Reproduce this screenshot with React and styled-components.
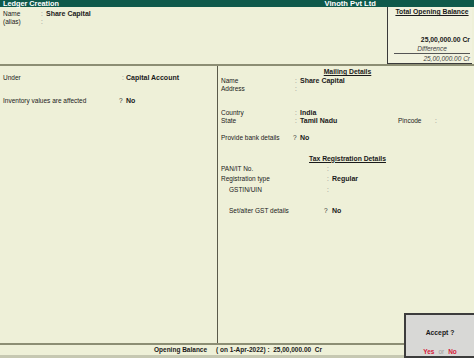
import React from 'react';
import styled, {createGlobalStyle} from 'styled-components';

const GlobalStyle = createGlobalStyle`
  html, body {
    margin: 0;
    padding: 0;
    background: #eef0d8;
  }
  body {
    font-family: "Liberation Sans", Arial, sans-serif;
    font-size: 6.5px;
    color: #1a1a1a;
  }
`;

const Screen = styled.div`
  position: relative;
  width: 474px;
  height: 358px;
  background: #eef0d8;
  display: flex;
  flex-direction: column;
  overflow: hidden;
`;

const TitleBar = styled.div`
  height: 7px;
  background: #0f5a4b;
  color: #fff;
  font-weight: bold;
  font-size: 7.3px;
  line-height: 7px;
  display: grid;
  grid-template-columns: 1fr 1fr;
  padding-left: 3px;
`;

const Company = styled.span`
  justify-self: start;
  padding-left: 86px;
  font-size: 7.6px;
`;

const TopArea = styled.div`
  height: 57px;
  display: flex;
  border-bottom: 2px solid #8c8e74;
`;

const TopFields = styled.div`
  flex: 1;
  padding: 3px 0 0 3px;
`;

const BalanceBox = styled.div`
  box-sizing: border-box;
  width: 85px;
  margin-right: 2px;
  border-left: 1px solid #3a3a3a;
  border-bottom: 1px solid #3a3a3a;
  background: #f1f2de;
  padding: 1px 2px 0 6px;
  display: flex;
  flex-direction: column;
  align-items: stretch;
  line-height: 8px;
`;

const BoxTitle = styled.div`
  font-weight: bold;
  text-decoration: underline;
  text-align: center;
  font-size: 6.8px;
`;

const BoxAmount = styled.div`
  font-weight: ${p => (p.$bold ? 'bold' : 'normal')};
  font-style: ${p => (p.$bold ? 'normal' : 'italic')};
  font-size: ${p => (p.$bold ? 6.8 : 6.5)}px;
  text-align: right;
  margin-top: ${p => p.$top}px;
  color: ${p => (p.$bold ? '#1a1a1a' : '#444')};
`;

const BoxLabel = styled.div`
  font-style: italic;
  text-align: center;
  color: #444;
  margin-top: 1px;
  border-bottom: 1px solid #555;
`;

const Main = styled.div`
  flex: 1;
  display: grid;
  grid-template-columns: 218px 1fr;
  border-bottom: 2px solid #8c8e74;
`;

const LeftPane = styled.div`
  border-right: 1px solid #5a5a4a;
  padding: 8px 0 0 3px;
`;

const RightPane = styled.div`
  padding: 2px 0 0 3px;
`;

const Row = styled.div`
  display: flex;
  align-items: baseline;
  height: ${p => p.$h || 7.5}px;
  margin-top: ${p => p.$top || 0}px;
  padding-left: ${p => p.$indent || 0}px;
  line-height: 7.5px;
  white-space: nowrap;
`;

const Label = styled.span`
  width: ${p => p.$w}px;
  flex: none;
`;

const Sep = styled.span`
  width: ${p => p.$w || 5}px;
  flex: none;
  color: ${p => (p.$q ? '#333' : '#888')};
`;

const Value = styled.span`
  font-weight: bold;
  font-size: 7px;
  width: ${p => p.$w || 'auto'};
  flex: none;
`;

const SectionHead = styled.div`
  font-weight: bold;
  font-size: 6.8px;
  text-decoration: underline;
  text-align: center;
  margin-top: ${p => p.$top}px;
  height: 8px;
  line-height: 8px;
`;

const BottomBar = styled.div`
  height: 10px;
  line-height: 10px;
  padding-left: 154px;
  font-weight: bold;
  display: flex;
  gap: 9px;
  white-space: nowrap;
`;

const Strip = styled.div`
  height: 3px;
  background: #c6c8b2;
`;

const AcceptBox = styled.div`
  position: absolute;
  left: 404px;
  top: 313px;
  right: 0;
  bottom: 0;
  background: #d8d8d6;
  border: 2px solid #3c3c3c;
  border-right: none;
  display: flex;
  flex-direction: column;
  align-items: center;
  font-weight: bold;
`;

const AcceptText = styled.div`
  margin-top: 14px;
  font-size: 6.8px;
`;

const Choice = styled.div`
  margin-top: 12px;
  display: flex;
  gap: 4px;
  color: #d4183a;
`;

const Or = styled.span`
  color: #9a9a9a;
  font-weight: normal;
`;

const App = () => (
  <>
    <GlobalStyle/>
    <Screen>
      <TitleBar>
        <span>Ledger Creation</span>
        <Company>Vinoth Pvt Ltd</Company>
      </TitleBar>
      <TopArea>
        <TopFields>
          <Row><Label $w={38}>Name</Label><Sep>:</Sep><Value>Share Capital</Value></Row>
          <Row><Label $w={38}>(alias)</Label><Sep>:</Sep></Row>
        </TopFields>
        <BalanceBox>
          <BoxTitle>Total Opening Balance</BoxTitle>
          <BoxAmount $bold $top={20}>25,00,000.00 Cr</BoxAmount>
          <BoxLabel>Difference</BoxLabel>
          <BoxAmount $top={1}>25,00,000.00 Cr</BoxAmount>
        </BalanceBox>
      </TopArea>
      <Main>
        <LeftPane>
          <Row><Label $w={119}>Under</Label><Sep $w={4}>:</Sep><Value>Capital Account</Value></Row>
          <Row $top={15}><Label $w={116}>Inventory values are affected</Label><Sep $q $w={7}>?</Sep><Value>No</Value></Row>
        </LeftPane>
        <RightPane>
          <SectionHead $top={0}>Mailing Details</SectionHead>
          <Row $top={1}><Label $w={74}>Name</Label><Sep>:</Sep><Value>Share Capital</Value></Row>
          <Row><Label $w={74}>Address</Label><Sep>:</Sep></Row>
          <Row $top={17}><Label $w={74}>Country</Label><Sep>:</Sep><Value>India</Value></Row>
          <Row><Label $w={74}>State</Label><Sep>:</Sep><Value $w="98px">Tamil Nadu</Value><Label $w={37}>Pincode</Label><Sep>:</Sep></Row>
          <Row $top={10}><Label $w={72}>Provide bank details</Label><Sep $q $w={7}>?</Sep><Value>No</Value></Row>
          <SectionHead $top={13}>Tax Registration Details</SectionHead>
          <Row $top={2}><Label $w={106}>PAN/IT No.</Label><Sep>:</Sep></Row>
          <Row $top={3}><Label $w={106}>Registration type</Label><Sep>:</Sep><Value>Regular</Value></Row>
          <Row $top={3} $indent={8}><Label $w={98}>GSTIN/UIN</Label><Sep>:</Sep></Row>
          <Row $top={14} $indent={8}><Label $w={95}>Set/alter GST details</Label><Sep $q $w={8}>?</Sep><Value>No</Value></Row>
        </RightPane>
      </Main>
      <BottomBar>
        <span>Opening Balance</span>
        <span>( on 1-Apr-2022) :&nbsp; 25,00,000.00 &nbsp;Cr</span>
      </BottomBar>
      <Strip/>
      <AcceptBox>
        <AcceptText>Accept ?</AcceptText>
        <Choice><span>Yes</span><Or>or</Or><span>No</span></Choice>
      </AcceptBox>
    </Screen>
  </>
);

export default App;
